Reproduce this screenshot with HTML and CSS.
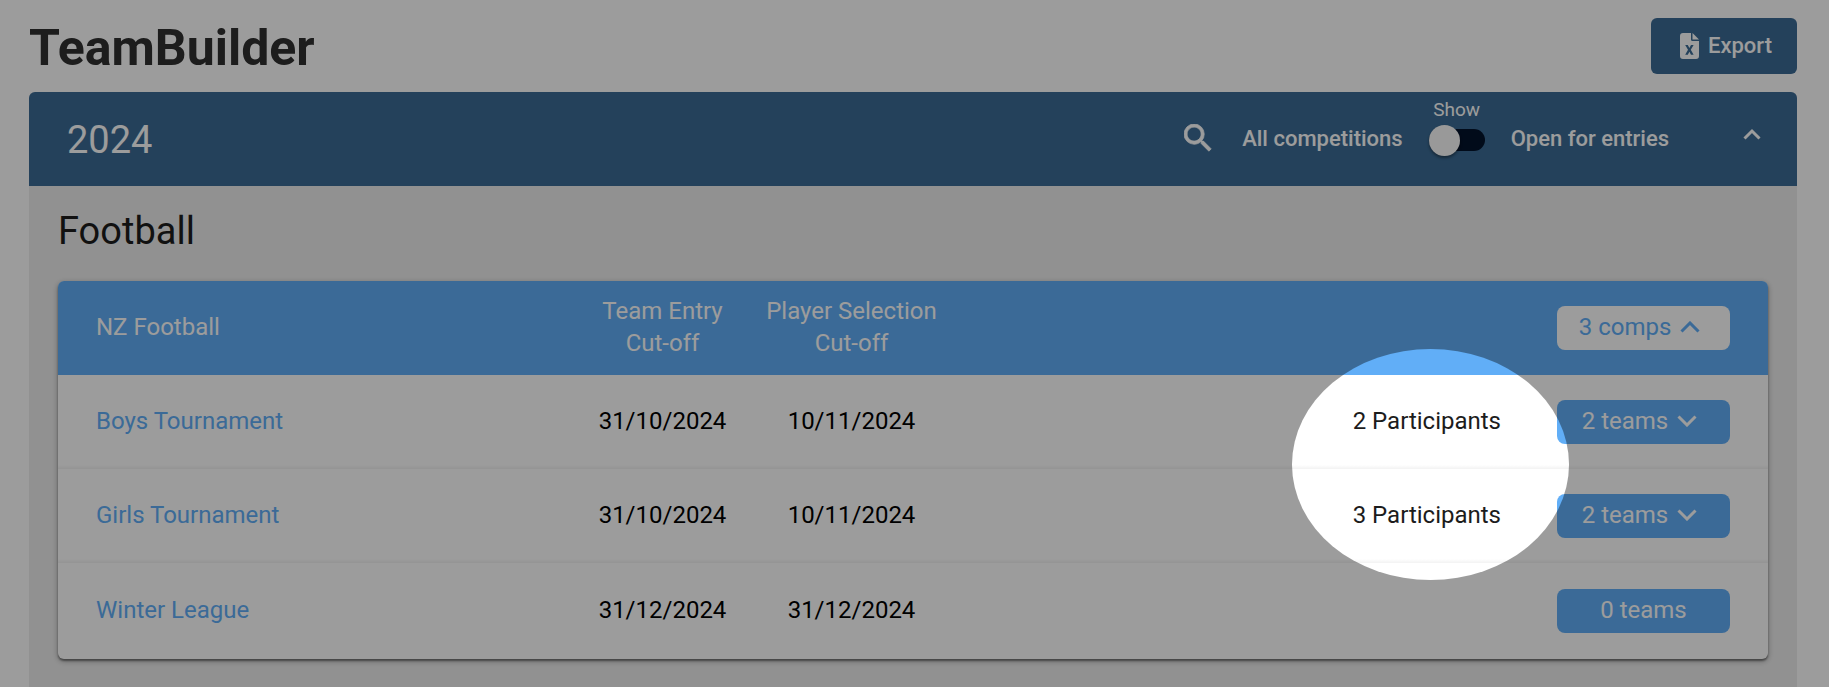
FILE: index.html
```
<!DOCTYPE html>
<html lang="en">
<head>
    <meta charset="UTF-8">
    <meta name="viewport" content="width=device-width, initial-scale=1.0">
    <title>TeamBuilder</title>
    <link rel="stylesheet" href="styles.css">
</head>
<body>
    <header class="page-header">
        <h1>TeamBuilder</h1>
        <button class="btn-export" type="button">
            <svg class="icon-file" viewBox="0 0 19 26" aria-hidden="true">
                <path fill="currentColor" fill-rule="evenodd" d="M3 0H11V6.500Q11 8 12.500 8H19V23Q19 26 16 26H3Q0 26 0 23V3Q0 0 3 0ZM5.200 12L8 16.800L5.200 21.800H7.800L9.400 18.700L11 21.800H13.600L10.800 16.800L13.600 12H11L9.400 15L7.800 12Z"/>
                <path fill="currentColor" d="M12.500 0L19 6.500H12.500Z"/>
            </svg>
            Export
        </button>
    </header>

    <main class="season">
        <div class="season-header">
            <h2>2024</h2>
            <div class="season-controls">
                <button class="icon-btn btn-search" type="button" aria-label="Search">
                    <svg viewBox="3 3 18 18" width="28" height="28" aria-hidden="true">
                        <path fill="currentColor" stroke="currentColor" stroke-width="0.5" d="M15.5 14h-.79l-.28-.27A6.471 6.471 0 0 0 16 9.500 6.500 6.500 0 1 0 9.500 16c1.610 0 3.090-.59 4.230-1.570l.27.28v.79l5 4.990L20.490 19l-4.990-5zm-6 0C7.010 14 5 11.990 5 9.500S7.010 5 9.500 5 14 7.010 14 9.500 11.990 14 9.500 14z"/>
                    </svg>
                </button>
                <span class="filter-label">All competitions</span>
                <div class="filter-switch">
                    <span class="filter-title">Show</span>
                    <input class="switch" type="checkbox" role="switch" id="openOnly">
                </div>
                <label class="filter-label" for="openOnly">Open for entries</label>
                <button class="icon-btn btn-collapse" type="button" aria-label="Collapse season">
                    <svg viewBox="0 0 18 20" width="18" height="20" aria-hidden="true">
                        <path fill="none" stroke="currentColor" stroke-width="3" d="M1.500 10.500L9 3l7.500 7.500"/>
                    </svg>
                </button>
            </div>
        </div>

        <section class="sport">
            <h3>Football</h3>
            <div class="card">
                <table class="comps">
                    <thead>
                        <tr>
                            <th class="col-name" scope="col">NZ Football</th>
                            <th class="col-date" scope="col">Team Entry<br>Cut-off</th>
                            <th class="col-date" scope="col">Player Selection<br>Cut-off</th>
                            <td class="col-people"></td>
                            <th class="col-action" scope="col">
                                <button class="pill pill-light" type="button">3 comps
                                    <svg class="chevron" viewBox="0 0 20 12" aria-hidden="true"><path d="M1.500 10.500L10 2l8.500 8.500"/></svg>
                                </button>
                            </th>
                        </tr>
                    </thead>
                    <tbody>
                        <tr>
                            <td class="col-name"><a href="#">Boys Tournament</a></td>
                            <td class="col-date">31/10/2024</td>
                            <td class="col-date">10/11/2024</td>
                            <td class="col-people">2 Participants</td>
                            <td class="col-action">
                                <button class="pill" type="button">2 teams
                                    <svg class="chevron" viewBox="0 0 20 12" aria-hidden="true"><path d="M1.500 1.500L10 10l8.500-8.500"/></svg>
                                </button>
                            </td>
                        </tr>
                        <tr>
                            <td class="col-name"><a href="#">Girls Tournament</a></td>
                            <td class="col-date">31/10/2024</td>
                            <td class="col-date">10/11/2024</td>
                            <td class="col-people">3 Participants</td>
                            <td class="col-action">
                                <button class="pill" type="button">2 teams
                                    <svg class="chevron" viewBox="0 0 20 12" aria-hidden="true"><path d="M1.500 1.500L10 10l8.500-8.500"/></svg>
                                </button>
                            </td>
                        </tr>
                        <tr>
                            <td class="col-name"><a href="#">Winter League</a></td>
                            <td class="col-date">31/12/2024</td>
                            <td class="col-date">31/12/2024</td>
                            <td class="col-people"></td>
                            <td class="col-action">
                                <button class="pill" type="button">0 teams</button>
                            </td>
                        </tr>
                    </tbody>
                </table>
                <div class="spotlight"></div>
            </div>
        </section>
    </main>
</body>
</html>
```
FILE: styles.css
```
:root {
    --navy: #3b6b95;
    --blue: #61aef7;
    --panel-bg: #eeeeee;
    --track: #03122b;
    --dim: rgba(0, 0, 0, 0.39);
}

* {
    margin: 0;
    padding: 0;
    box-sizing: border-box;
}

body {
    min-height: 100vh;
    display: flex;
    flex-direction: column;
    padding: 0 32px 0 29px;
    background-color: white;
    color: #1c1c1c;
    font-family: Roboto, "Liberation Sans", sans-serif;
    font-size: 24px;
    line-height: 32px;
    overflow-x: hidden;
}

button {
    border: none;
    font: inherit;
    cursor: pointer;
}

.page-header {
    height: 92px;
    display: flex;
    justify-content: space-between;
    align-items: center;
}

h1 {
    padding-top: 4px;
    font-size: 50px;
    font-weight: bold;
    line-height: 56px;
    color: #303030;
}

.btn-export {
    display: flex;
    align-items: center;
    gap: 9px;
    height: 56px;
    padding: 0 25px 0 29px;
    border-radius: 6px;
    background-color: var(--navy);
    color: white;
    font-size: 22px;
    font-weight: 500;
}

.icon-file {
    width: 19px;
    height: 26px;
}

/* Season panel */
.season {
    flex: 1;
    border-radius: 6px 6px 0 0;
    background-color: var(--panel-bg);
}

.season-header {
    height: 94px;
    display: flex;
    justify-content: space-between;
    align-items: center;
    padding: 0 36px 0 38px;
    border-radius: 6px 6px 0 0;
    background-color: var(--navy);
    color: white;
}

h2,
h3 {
    font-size: 38px;
    font-weight: normal;
    line-height: 48px;
}

h2 {
    padding-top: 2px;
}

.season-controls {
    display: flex;
    align-items: center;
}

.icon-btn {
    display: flex;
    background: none;
    color: white;
}

.btn-search {
    margin-right: 30px;
    padding-bottom: 2px;
}

.btn-collapse {
    margin-left: 74px;
    padding-bottom: 2px;
}

.filter-label {
    font-size: 22px;
    font-weight: 500;
}

.filter-switch {
    display: flex;
    flex-direction: column;
    align-items: center;
    gap: 8px;
    margin: 0 26px;
    padding-bottom: 28px;
}

.filter-title {
    font-size: 19px;
    line-height: 22px;
}

.switch {
    appearance: none;
    display: flex;
    align-items: center;
    width: 56px;
    height: 22px;
    border-radius: 11px;
    background-color: var(--track);
    cursor: pointer;
}

.switch::before {
    content: "";
    width: 31px;
    height: 31px;
    flex-shrink: 0;
    border-radius: 50%;
    background-color: #fafafa;
    box-shadow: 0 2px 3px rgba(0, 0, 0, 0.4);
}

.switch:checked::before {
    margin-left: auto;
}

/* Sport section */
.sport {
    padding: 21px 29px 28px;
}

.card {
    position: relative;
    margin-top: 26px;
    border-radius: 6px;
    background-color: white;
    box-shadow: 0 2px 2px rgba(0, 0, 0, 0.4), 0 2px 6px rgba(0, 0, 0, 0.3);
}

.comps {
    width: 100%;
    table-layout: fixed;
    border-collapse: collapse;
}

.comps th {
    font-weight: normal;
}

.comps thead tr > * {
    background-color: var(--blue);
    color: white;
}

.comps thead tr > :first-child {
    border-top-left-radius: 6px;
}

.comps thead tr > :last-child {
    border-top-right-radius: 6px;
}

.comps tr {
    height: 94px;
}

.comps tbody tr:last-child {
    height: 96px;
}

.comps tbody tr:not(:last-child) td {
    background: linear-gradient(to top, rgba(0, 0, 0, 0.05), transparent 4px);
}

.comps a {
    color: var(--blue);
    text-decoration: none;
}

.comps a:hover {
    text-decoration: underline;
}

.col-name,
.col-date,
.col-people {
    padding-bottom: 2px;
}

.col-name {
    width: 510px;
    padding-left: 38px;
    text-align: left;
}

.col-date {
    width: 189px;
    text-align: center;
}

tbody .col-date {
    color: black;
}

.col-people {
    padding-right: 56px;
    text-align: right;
}

.col-action {
    width: 211px;
    padding-right: 38px;
}

.pill {
    display: flex;
    justify-content: center;
    align-items: center;
    width: 100%;
    height: 44px;
    padding-bottom: 2px;
    border-radius: 8px;
    background-color: var(--blue);
    color: white;
}

.pill-light {
    background-color: white;
    color: var(--blue);
}

.chevron {
    width: 20px;
    height: 12px;
    margin: 0 8px 0 9px;
    fill: none;
    stroke: currentColor;
    stroke-width: 3;
}

/* Dims the page around the participant counts */
.spotlight {
    position: absolute;
    top: 68px;
    right: 199px;
    width: 277px;
    height: 231px;
    border-radius: 50%;
    box-shadow: 0 0 0 4000px var(--dim);
    pointer-events: none;
}
```
